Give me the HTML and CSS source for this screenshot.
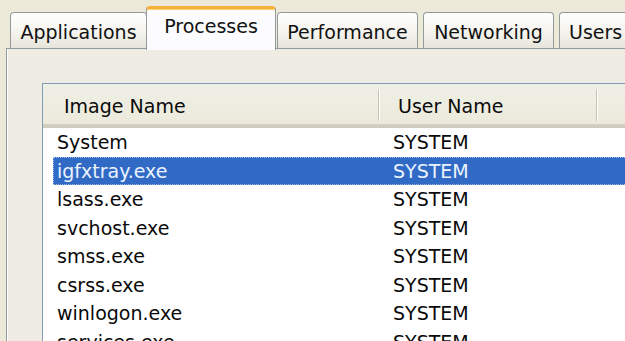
FILE: index.html
```html
<!DOCTYPE html>
<html>
<head>
<meta charset="utf-8">
<link rel="stylesheet" href="styles.css">
</head>
<body>
<div class="window">
  <div class="tabs">
    <div class="tab t-app">Applications</div>
    <div class="tab active t-proc">Processes</div>
    <div class="tab t-perf">Performance</div>
    <div class="tab t-net">Networking</div>
    <div class="tab t-users">Users</div>
  </div>
  <div class="panel">
    <div class="list">
      <div class="header">
        <div class="hcell c1">Image Name</div>
        <div class="hsep"></div>
        <div class="hcell c2">User Name</div>
        <div class="hsep"></div>
        <div class="hcell c3"></div>
      </div>
      <div class="rows">
        <div class="row"><span class="cell c1">System</span><span class="cell c2">SYSTEM</span></div>
        <div class="row selected"><span class="cell c1">igfxtray.exe</span><span class="cell c2">SYSTEM</span></div>
        <div class="row"><span class="cell c1">lsass.exe</span><span class="cell c2">SYSTEM</span></div>
        <div class="row"><span class="cell c1">svchost.exe</span><span class="cell c2">SYSTEM</span></div>
        <div class="row"><span class="cell c1">smss.exe</span><span class="cell c2">SYSTEM</span></div>
        <div class="row"><span class="cell c1">csrss.exe</span><span class="cell c2">SYSTEM</span></div>
        <div class="row"><span class="cell c1">winlogon.exe</span><span class="cell c2">SYSTEM</span></div>
        <div class="row"><span class="cell c1">services.exe</span><span class="cell c2">SYSTEM</span></div>
      </div>
    </div>
  </div>
</div>
</body>
</html>
```
FILE: styles.css
```css
html, body {
  margin: 0;
  padding: 0;
  background: #ECE9D8;
  font-family: "DejaVu Sans", Tahoma, sans-serif;
  font-size: 19px;
  color: #0A0A0A;
}

.window {
  padding-left: 6px;
  width: 625px;
  height: 341px;
  box-sizing: border-box;
  overflow: hidden;
}

.tabs {
  display: flex;
  align-items: flex-end;
  height: 48px;
  padding-left: 4px;
}

.tab {
  box-sizing: border-box;
  flex: none;
  height: 36px;
  border: 1px solid #919B9C;
  border-bottom: none;
  border-radius: 4px 4px 0 0;
  background: linear-gradient(#FFFFFF, #F3F2EC 60%, #E6E4DA);
  display: flex;
  align-items: center;
  justify-content: center;
  padding-top: 2px;
  white-space: nowrap;
  color: #111;
}

.t-app { width: 137px; }
.t-proc { width: 130px; margin-left: -1px; }
.t-perf { width: 141px; margin-left: 1px; }
.t-net { width: 131px; margin-left: 5px; }
.t-users { width: 100px; margin-left: 5px; justify-content: flex-start; padding-left: 9px; }

.tab.active {
  height: 44px;
  margin-bottom: -2px;
  position: relative;
  z-index: 2;
  background: #FCFCFE;
  border-top: 3px solid #F5B13C;
  box-shadow: inset 0 1px 0 #FFD46A;
  padding-top: 0;
  padding-bottom: 8px;
}

.panel {
  border-top: 1px solid #919B9C;
  border-left: 1px solid #919B9C;
  background: linear-gradient(90deg, #FFFFFF 0, #FFFFFF 1px, #EFEDE3 1px);
  height: 300px;
  padding-top: 34px;
  padding-left: 35px;
}

.list {
  border-top: 1px solid #7F9DB9;
  border-left: 1px solid #7F9DB9;
  background: #FFFFFF;
  width: 640px;
  height: 270px;
}

.header {
  display: flex;
  height: 41px;
  background: linear-gradient(#F0EFE6, #EBEADB);
  border-bottom: 3px solid #D0CDBC;
  box-shadow: 0 -1px 0 #D6D3C6 inset;
}

.hcell {
  display: flex;
  align-items: center;
  padding-top: 3px;
  box-sizing: border-box;
  white-space: nowrap;
}

.header .c1 { width: 335px; padding-left: 21px; }
.header .c2 { width: 216px; padding-left: 18px; }
.header .c3 { flex: 1; }

.hsep {
  width: 1px;
  margin: 5px 0 4px;
  background: #C7C5B2;
  border-right: 1px solid #FFFFFF;
}

.row {
  display: flex;
  height: 28.5px;
  line-height: 28.5px;
  margin-left: 10px;
  white-space: nowrap;
}

.row .c1 { width: 327px; padding-left: 4px; box-sizing: border-box; }
.row .c2 { padding-left: 13px; }

.row.selected {
  background: #316AC5;
  color: #EAF3FF;
  outline: 1px dotted #9FB8E6;
  outline-offset: -1px;
}
```
